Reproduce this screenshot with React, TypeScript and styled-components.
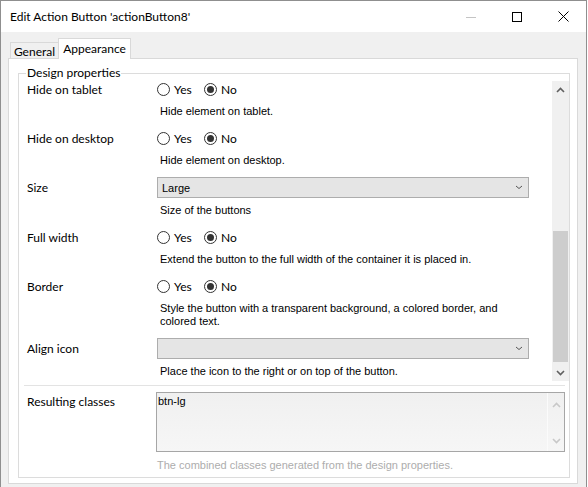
import React from 'react'
import styled, { createGlobalStyle } from 'styled-components'

const UI_FONT = `Lato, "Segoe UI", sans-serif`
const MS_FONT = `"Liberation Sans", Arial, sans-serif`

const GlobalStyle = createGlobalStyle`
    html, body {
        margin: 0;
        padding: 0;
        background: #ffffff;
    }
    * {
        box-sizing: border-box;
    }
`

const Window = styled.div`
    width: 587px;
    height: 487px;
    border: 1px solid #8f8f8f;
    border-bottom: none;
    background: #f0f0f0;
    display: flex;
    flex-direction: column;
    font-family: ${UI_FONT};
    font-size: 12px;
    color: #000;
    overflow: hidden;
`

const TitleBar = styled.div`
    height: 31px;
    flex-shrink: 0;
    background: #ffffff;
    display: flex;
    align-items: center;
`

const Title = styled.div`
    flex: 1;
    padding-left: 9px;
    white-space: nowrap;
`

const CaptionButton = styled.div`
    width: 46px;
    height: 31px;
    display: flex;
    align-items: center;
    justify-content: center;
`

const Body = styled.div`
    flex: 1;
    display: flex;
    flex-direction: column;
    padding: 6px 0 0 7px;
`

const TabStrip = styled.div`
    display: flex;
    align-items: flex-end;
    height: 20px;
    padding-left: 2px;
`

const Tab = styled.div<{ $active?: boolean }>`
    display: flex;
    align-items: center;
    justify-content: center;
    border: 1px solid #d9d9d9;
    border-bottom: none;
    white-space: nowrap;
    ${({ $active }) => $active ? `
        height: 21px;
        width: 73px;
        margin-bottom: -1px;
        background: #ffffff;
        position: relative;
        z-index: 1;
        padding-bottom: 2px;
    ` : `
        height: 16px;
        width: 48px;
        border-right: none;
        background: #f0f0f0;
        padding-top: 1px;
    `}
`

const TabPanel = styled.div`
    width: 570px;
    height: 426px;
    background: #ffffff;
    border: 1px solid #d9d9d9;
    padding: 6px 7px 5px 9px;
`

const GroupBox = styled.fieldset`
    margin: 0;
    padding: 0;
    height: 100%;
    min-width: 0;
    border: 1px solid #dcdcdc;
`

const GroupTitle = styled.legend`
    margin-left: 7px;
    padding: 0 1px;
    line-height: 16px;
`

const GroupInner = styled.div`
    display: flex;
    flex-direction: column;
`

const Viewport = styled.div`
    height: 300px;
    display: flex;
`

const ScrollContent = styled.div`
    flex: 1;
    overflow: hidden;
    padding-left: 8px;
`

const PropertyList = styled.div`
    margin-top: -3px;
`

const Property = styled.div`
    display: grid;
    grid-template-columns: 130px 1fr;
    padding-bottom: 9px;
`

const Label = styled.div<{ $tall?: boolean }>`
    height: ${({ $tall }) => $tall ? '23px' : '22px'};
    display: flex;
    align-items: center;
    white-space: nowrap;
`

const Control = styled.div<{ $tall?: boolean }>`
    height: ${({ $tall }) => $tall ? '23px' : '22px'};
    display: flex;
    align-items: center;
`

const Description = styled.div`
    grid-column: 2;
    margin-top: 5px;
    padding-left: 3px;
    width: 372px;
    font-family: ${MS_FONT};
    font-size: 11px;
    line-height: 13px;
`

const RadioOption = styled.div`
    display: flex;
    align-items: center;
    width: 47px;
    white-space: nowrap;
`

const RadioCircle = styled.span<{ $checked?: boolean }>`
    width: 13px;
    height: 13px;
    border-radius: 50%;
    border: 1px solid #333333;
    background: #ffffff;
    margin-right: 4px;
    display: flex;
    align-items: center;
    justify-content: center;
    flex-shrink: 0;

    &::after {
        content: '';
        width: 7px;
        height: 7px;
        border-radius: 50%;
        background: ${({ $checked }) => $checked ? '#333333' : 'transparent'};
    }
`

const Select = styled.div`
    width: 372px;
    height: 21px;
    border: 1px solid #adadad;
    background: #e5e5e5;
    display: flex;
    align-items: center;
    justify-content: space-between;
    padding: 0 5px 0 4px;
    font-family: ${MS_FONT};
    font-size: 11px;
`

const ScrollBar = styled.div`
    width: 17px;
    display: flex;
    flex-direction: column;
    background: #f0f0f0;
    flex-shrink: 0;
`

const ArrowButton = styled.div`
    height: 17px;
    display: flex;
    align-items: center;
    justify-content: center;
    flex-shrink: 0;
`

const Track = styled.div`
    flex: 1;
    position: relative;
`

const Thumb = styled.div`
    position: absolute;
    left: 1px;
    right: 1px;
    background: #cdcdcd;
`

const BottomSection = styled.div`
    margin: 4px 4px 0 5px;
    border-top: 1px solid #e3e3e3;
    padding: 6px 0 0 3px;
    display: grid;
    grid-template-columns: 129px 1fr;
`

const ResultLabel = styled.div`
    line-height: 16px;
    padding-top: 2px;
`

const ResultBox = styled.div`
    height: 60px;
    border: 1px solid #a6a6a6;
    background: linear-gradient(#f0f0f0, #f6f6f6);
    display: flex;
`

const ResultText = styled.div`
    flex: 1;
    padding: 2px 0 0 1px;
    font-family: ${MS_FONT};
    font-size: 11px;
    line-height: 13px;
`

const BoxScroll = styled.div`
    width: 17px;
    border-left: 1px solid #fbfbfb;
    display: flex;
    flex-direction: column;
    justify-content: space-between;
    padding: 3px 0 2px;
`

const HintText = styled.div`
    grid-column: 2;
    margin-top: 7px;
    padding-left: 1px;
    font-family: ${MS_FONT};
    font-size: 11px;
    line-height: 13px;
    color: #adadad;
`

const Chevron = ({ up, color = '#606060', width = 9, height = 6, stroke = 1.6 }: { up?: boolean, color?: string, width?: number, height?: number, stroke?: number }) => (
    <svg width={width} height={height} viewBox={`0 0 ${width} ${height}`}>
        <path
            d={up
                ? `M1 ${height - 1} L${width / 2} 1.5 L${width - 1} ${height - 1}`
                : `M1 1 L${width / 2} ${height - 1.5} L${width - 1} 1`}
            fill="none"
            stroke={color}
            strokeWidth={stroke}
        />
    </svg>
)

type YesNoProps = {
    label: string
    description: React.ReactNode
    value: boolean
}

const YesNoProperty = ({ label, description, value }: YesNoProps) => (
    <Property>
        <Label>{label}</Label>
        <Control>
            <RadioOption><RadioCircle $checked={value} />Yes</RadioOption>
            <RadioOption><RadioCircle $checked={!value} />No</RadioOption>
        </Control>
        <Description>{description}</Description>
    </Property>
)

type SelectProps = {
    label: string
    description: string
    value: string
}

const SelectProperty = ({ label, description, value }: SelectProps) => (
    <Property>
        <Label $tall>{label}</Label>
        <Control $tall>
            <Select>
                <span>{value}</span>
                <Chevron color="#555555" width={8} height={5} stroke={1} />
            </Select>
        </Control>
        <Description>{description}</Description>
    </Property>
)

const App = () => {
    return (
        <>
            <GlobalStyle />
            <Window>
                <TitleBar>
                    <Title>Edit Action Button 'actionButton8'</Title>
                    <CaptionButton>
                        <svg width="10" height="10"><path d="M0 5.5 H10" stroke="#c4c4c4" /></svg>
                    </CaptionButton>
                    <CaptionButton>
                        <svg width="10" height="10"><rect x="0.5" y="0.5" width="9" height="9" fill="none" stroke="#000" /></svg>
                    </CaptionButton>
                    <CaptionButton>
                        <svg width="11" height="11"><path d="M0.5 0.5 L10.5 10.5 M10.5 0.5 L0.5 10.5" stroke="#000" /></svg>
                    </CaptionButton>
                </TitleBar>
                <Body>
                    <TabStrip>
                        <Tab>General</Tab>
                        <Tab $active>Appearance</Tab>
                    </TabStrip>
                    <TabPanel>
                        <GroupBox>
                            <GroupTitle>Design properties</GroupTitle>
                            <GroupInner>
                                <Viewport>
                                    <ScrollContent>
                                        <PropertyList>
                                            <YesNoProperty label="Hide on tablet" description="Hide element on tablet." value={false} />
                                            <YesNoProperty label="Hide on desktop" description="Hide element on desktop." value={false} />
                                            <SelectProperty label="Size" description="Size of the buttons" value="Large" />
                                            <YesNoProperty label="Full width" description="Extend the button to the full width of the container it is placed in." value={false} />
                                            <YesNoProperty label="Border" description="Style the button with a transparent background, a colored border, and colored text." value={false} />
                                            <SelectProperty label="Align icon" description="Place the icon to the right or on top of the button." value="" />
                                        </PropertyList>
                                    </ScrollContent>
                                    <ScrollBar>
                                        <ArrowButton><Chevron up /></ArrowButton>
                                        <Track>
                                            <Thumb style={{ top: 133, height: 131 }} />
                                        </Track>
                                        <ArrowButton><Chevron /></ArrowButton>
                                    </ScrollBar>
                                </Viewport>
                                <BottomSection>
                                    <ResultLabel>Resulting classes</ResultLabel>
                                    <ResultBox>
                                        <ResultText>btn-lg</ResultText>
                                        <BoxScroll>
                                            <ArrowButton><Chevron up color="#c8c8c8" /></ArrowButton>
                                            <ArrowButton><Chevron color="#c8c8c8" /></ArrowButton>
                                        </BoxScroll>
                                    </ResultBox>
                                    <HintText>The combined classes generated from the design properties.</HintText>
                                </BottomSection>
                            </GroupInner>
                        </GroupBox>
                    </TabPanel>
                </Body>
            </Window>
        </>
    )
}

export default App
